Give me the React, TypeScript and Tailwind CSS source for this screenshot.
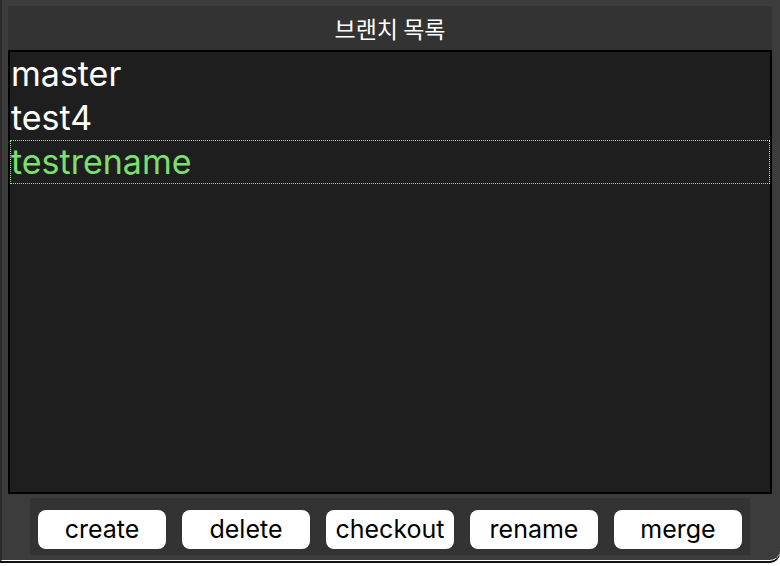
const branches = ["master", "test4", "testrename"];
const selected = "testrename";
const actions = ["create", "delete", "checkout", "rename", "merge"];

export default function App() {
  return (
    <div className="w-[780px] h-[566px] bg-white overflow-hidden">
      <div className="h-[561px] flex flex-col bg-[#3c3c3c] border-l-2 border-l-[#2b2b2b] border-b border-b-white rounded-br-[10px] shadow-[0_2px_0_0_#111] pl-[6px] pr-[8px] pt-[6px] pb-[5px]">
        <div
          className="h-[44px] shrink-0 flex items-center justify-center bg-[#333333] text-white text-[23px]"
          style={{ fontFamily: '"Noto Sans CJK KR", "Noto Sans", sans-serif' }}
        >
          브랜치 목록
        </div>
        <div
          className="flex-1 bg-[#1e1e1e] border-2 border-black"
          style={{ fontFamily: "Inter, 'Liberation Sans', sans-serif" }}
        >
          {branches.map((b) => (
            <div
              key={b}
              className={
                b === selected
                  ? "h-[44px] flex items-center border border-dotted border-[#8cf07a] text-[#7ddf6e] text-[34px] leading-none"
                  : "h-[44px] flex items-center border border-transparent text-white text-[34px] leading-none"
              }
            >
              {b}
            </div>
          ))}
        </div>
        <div
          className="mt-[4px] mx-[22px] h-[57px] shrink-0 bg-[#333333] flex gap-4 px-2 pt-3"
          style={{ fontFamily: "Inter, 'Liberation Sans', sans-serif" }}
        >
          {actions.map((a) => (
            <button
              key={a}
              className="w-[128px] h-[39px] bg-white rounded-lg text-black text-[25px] leading-none flex items-center justify-center"
            >
              {a}
            </button>
          ))}
        </div>
      </div>
    </div>
  );
}
